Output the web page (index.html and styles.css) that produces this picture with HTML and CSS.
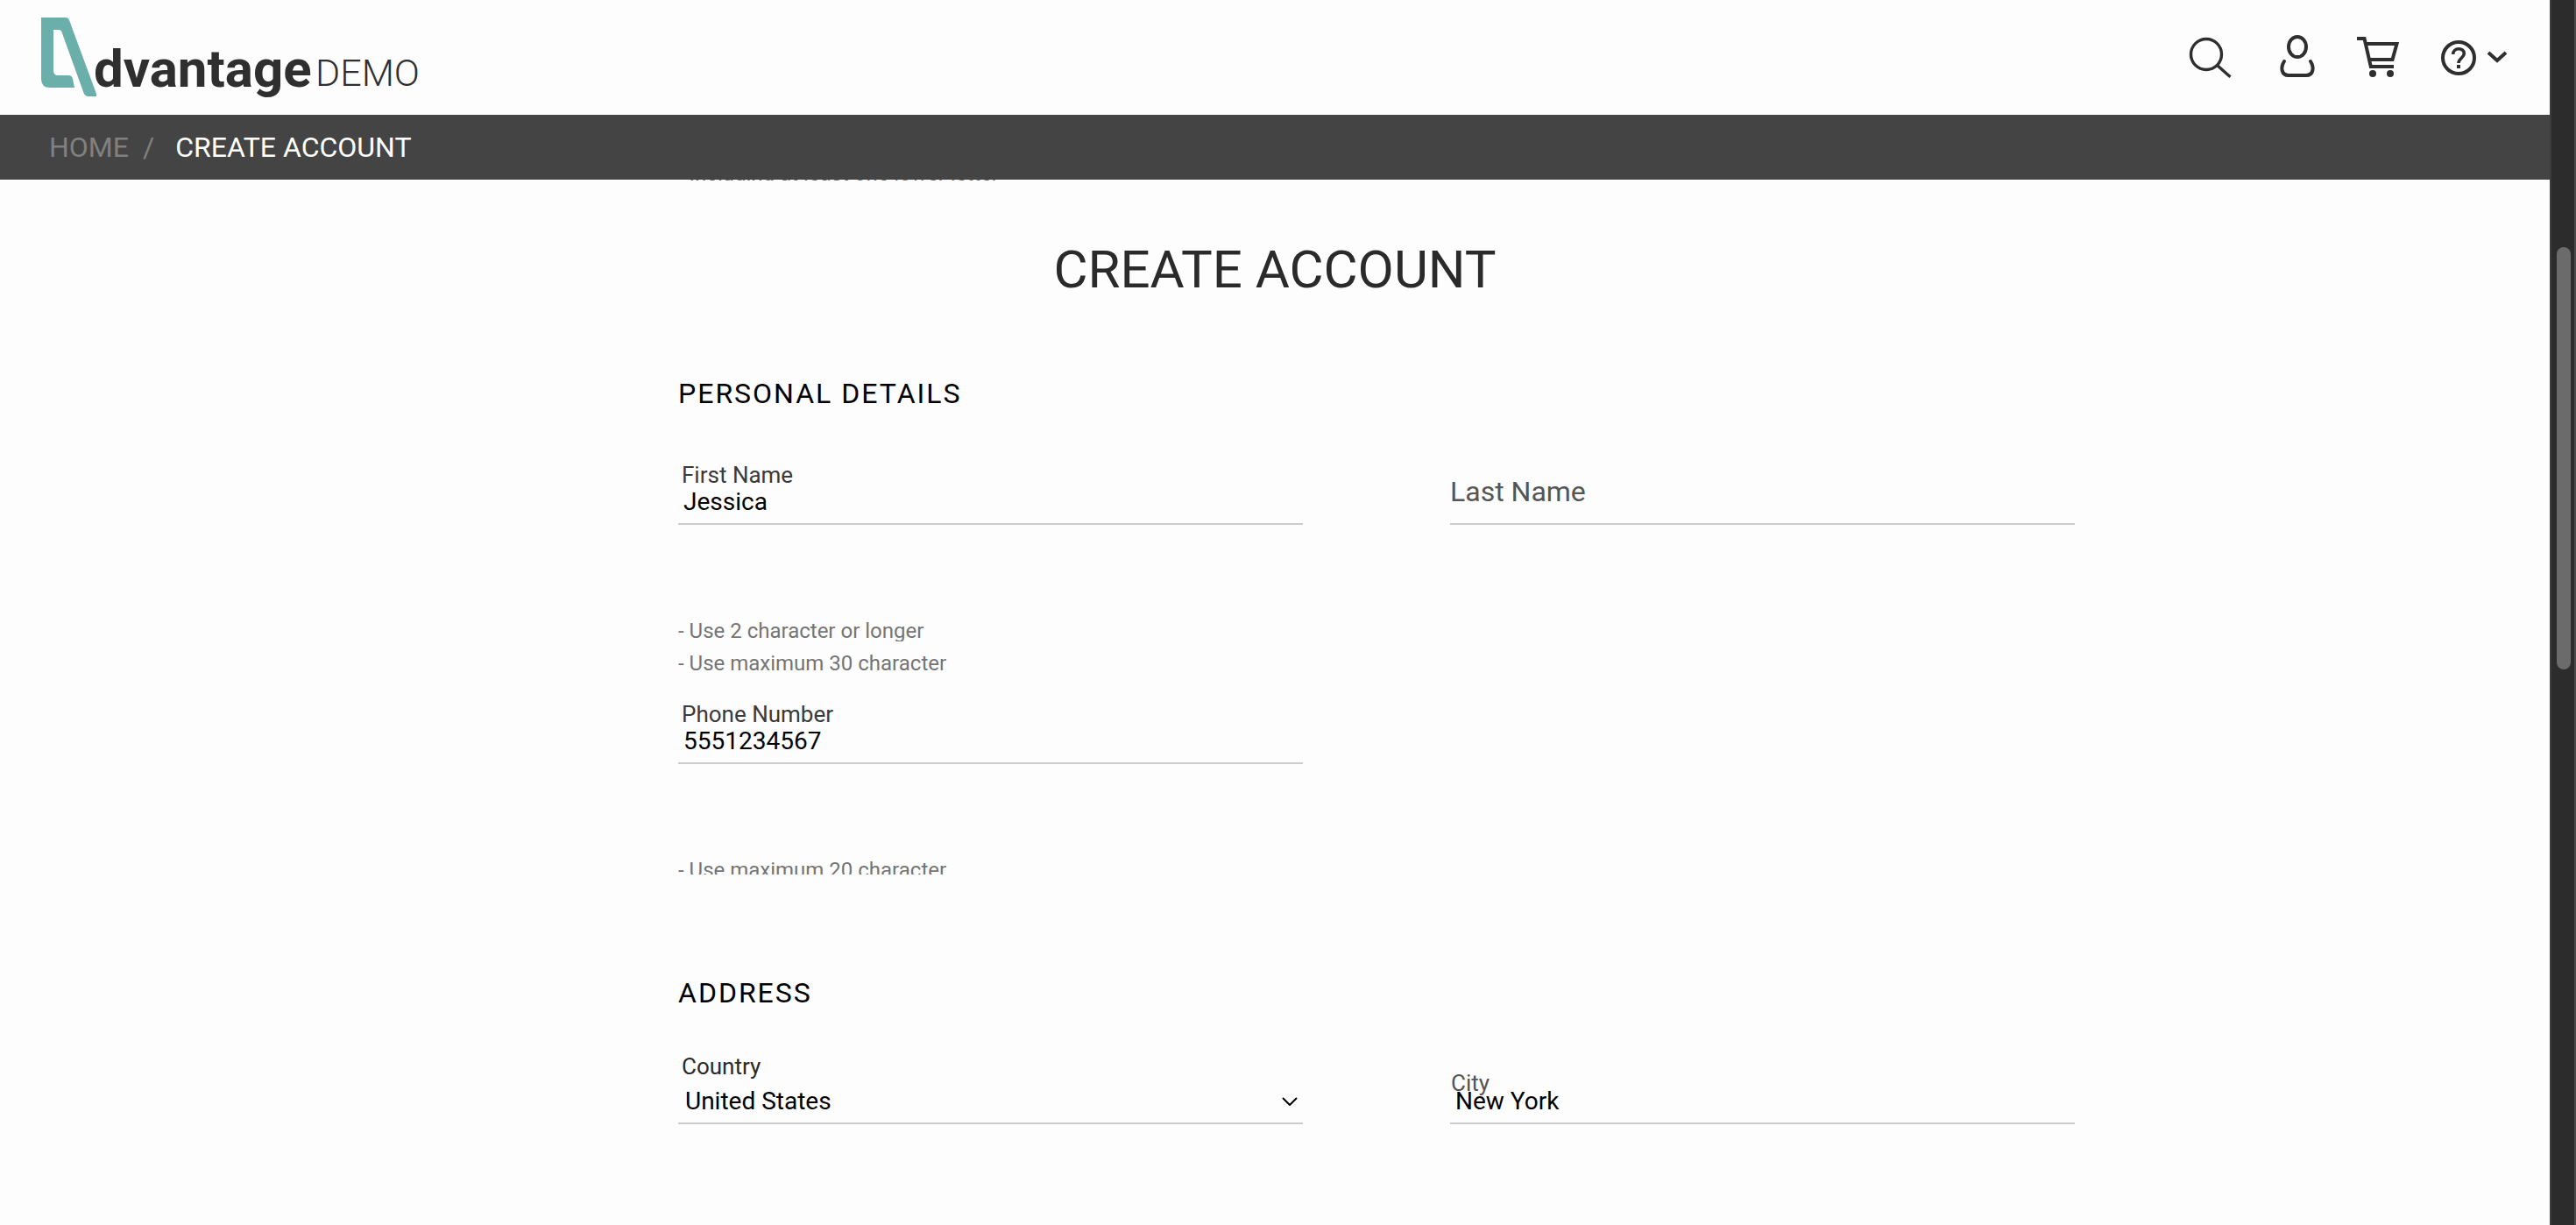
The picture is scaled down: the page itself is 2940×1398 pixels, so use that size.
FILE: index.html
```html
<!DOCTYPE html>
<html lang="en">
<head>
<meta charset="utf-8">
<title>Create account – Advantage Demo</title>
<link rel="stylesheet" href="styles.css">
</head>
<body>
<div class="page">
  <header class="header">
    <a class="logo" href="#" aria-label="Advantage Demo">
      <svg width="440" height="91" viewBox="0 0 440 91">
        <path class="logo-mark" d="M0 0H28Q31 0 32 3L63 87V90H54Q50 90 48.500 86L24 18Q23 14 20 14H14V60Q14 66 19 66H31Q35 66 36 70L38 80H10Q0 80 0 70Z"/>
        <text class="logo-name" x="60" y="79">dvantage</text>
        <text class="logo-demo" x="313" y="78">DEMO</text>
      </svg>
    </a>
    <div class="tools">
      <button class="tool tool-search" type="button" aria-label="Search">
        <svg width="48" height="51" viewBox="0 0 48 51">
          <circle cx="19" cy="22" r="17.500" stroke-width="3.400"/>
          <path d="M32 35L46.500 47.800" stroke-width="3.400"/>
        </svg>
      </button>
      <button class="tool" type="button" aria-label="User account">
        <svg width="40" height="51" viewBox="0 0 40 51">
          <ellipse cx="20" cy="13.500" rx="10" ry="11.600" stroke-width="4"/>
          <path d="M5 30C1 36 1 46 10 46H30C39 46 39 36 35 30" stroke-width="4" stroke-linecap="round"/>
        </svg>
      </button>
      <button class="tool" type="button" aria-label="Shopping cart">
        <svg width="48" height="51" viewBox="0 0 48 51">
          <path d="M0 4H8.500L15.800 36H42M10.500 10H45.500L40.500 28H14.500" stroke-width="4"/>
          <circle class="solid" cx="18" cy="44" r="4"/>
          <circle class="solid" cx="38" cy="44" r="4"/>
        </svg>
      </button>
      <button class="tool" type="button" aria-label="Help">
        <svg width="76" height="51" viewBox="0 0 76 51">
          <circle cx="20" cy="26" r="18" stroke-width="4"/>
          <path d="M13.700 22C13.700 13.700 26.300 14 26.300 21C26.300 26 20 26.500 20 32" stroke-width="3.600"/>
          <path d="M20 34V38" stroke-width="4"/>
          <path d="M54 20L64 29L74 20" stroke-width="4"/>
        </svg>
      </button>
    </div>
  </header>

  <nav class="crumbs" aria-label="Breadcrumb">
    <a class="crumb-home" href="#">HOME</a>
    <span class="crumb-sep">/</span>
    <span>CREATE ACCOUNT</span>
  </nav>

  <main>
    <div class="band">
      <p class="hint-tail">- Including at least one lower letter</p>
    </div>
    <h1 class="title">CREATE ACCOUNT</h1>

    <form class="band">
      <div class="form">
        <h2 class="heading">PERSONAL DETAILS</h2>
        <div class="fields">
          <div class="field">
            <input class="control" id="first-name" type="text" value="Jessica">
            <label class="label" for="first-name">First Name</label>
            <ul class="hints">
              <li class="hint">- Use 2 character or longer</li>
              <li class="hint">- Use maximum 30 character</li>
            </ul>
          </div>
          <div class="field">
            <input class="control" id="last-name" type="text">
            <label class="label label-resting" for="last-name">Last Name</label>
          </div>
          <div class="field">
            <input class="control" id="phone" type="tel" value="5551234567">
            <label class="label" for="phone">Phone Number</label>
            <ul class="hints hints-opening">
              <li class="hint">- Use maximum 20 character</li>
            </ul>
          </div>
        </div>

        <h2 class="heading heading-next">ADDRESS</h2>
        <div class="fields">
          <div class="field">
            <select class="control control-select" id="country">
              <option>United States</option>
            </select>
            <label class="label label-select" for="country">Country</label>
            <svg class="chevron" width="18" height="10" viewBox="0 0 18 10"><path d="M1 1L9 9L17 1"/></svg>
          </div>
          <div class="field">
            <input class="control" id="city" type="text" value="New York">
            <label class="label label-moving" for="city">City</label>
          </div>
        </div>
      </div>
    </form>
  </main>
</div>
<div class="scrollbar" aria-hidden="true"><div class="thumb"></div></div>
</body>
</html>
```
FILE: styles.css
```css
* {
  box-sizing: border-box;
}

body {
  margin: 0;
  height: 100vh;
  overflow: hidden;
  display: grid;
  grid-template-columns: 1fr 30px;
  background: #fdfdfd;
  color: #000;
  font-family: Roboto, "Liberation Sans", sans-serif;
}

.page {
  min-width: 0;
}

/* Header */
.header {
  height: 131px;
  padding: 0 48px 0 47px;
  display: flex;
  align-items: center;
  justify-content: space-between;
}

.logo svg,
.tool svg {
  display: block;
  overflow: visible;
}

.logo-mark {
  fill: #6aafaa;
}

.logo-name {
  fill: #2f2f2f;
  font-size: 60px;
  font-weight: 700;
}

.logo-demo {
  fill: #2f2f2f;
  font-size: 43px;
  font-weight: 300;
}

.tools {
  display: flex;
  gap: 48px;
}

.tool {
  padding: 0;
  border: 0;
  background: none;
  cursor: pointer;
}

.tool-search {
  margin-right: 7px;
}

.tool svg {
  fill: none;
  stroke: #2f2f2f;
}

.tool .solid {
  fill: #2f2f2f;
  stroke: none;
}

/* Breadcrumb */
.crumbs {
  height: 74px;
  padding: 0 56px;
  display: flex;
  align-items: center;
  background: #444;
  color: #fff;
  font-size: 32px;
}

.crumb-home,
.crumb-sep {
  color: #808080;
  text-decoration: none;
}

.crumb-sep {
  margin: 0 24px 0 16px;
}

/* Page content sits in the middle track */
.band {
  display: grid;
  grid-template-columns: 774fr 1594fr 542fr;
}

.band > * {
  grid-column: 2;
}

.hint-tail {
  margin: 0;
  height: 1px;
  overflow: hidden;
  display: flex;
  align-items: flex-end;
  color: #666;
  font-size: 24px;
  line-height: 16px;
}

.title {
  margin: 66px 0 85px;
  color: #2a2a2a;
  font-size: 60px;
  font-weight: 400;
  line-height: 72px;
  text-align: center;
}

.heading {
  margin: 0 0 78px;
  font-size: 32px;
  font-weight: 400;
  line-height: 40px;
  letter-spacing: 2px;
}

.heading-next {
  margin-top: 115px;
}

.fields {
  display: grid;
  grid-template-columns: 1fr 1fr;
  gap: 51px 168px;
}

.field {
  position: relative;
}

.control {
  display: block;
  width: 100%;
  height: 52px;
  padding: 0 6px;
  border: 0;
  border-bottom: 2px solid #ccc;
  border-radius: 0;
  outline: 0;
  appearance: none;
  background: none;
  color: #000;
  font-family: inherit;
  font-size: 28px;
}

.control-select {
  padding-left: 8px;
}

.label {
  position: absolute;
  left: 4px;
  top: -21px;
  color: #3a3a3a;
  font-size: 26px;
  line-height: 32px;
}

.label-resting {
  left: 0;
  top: -2px;
  color: #555;
  font-size: 32px;
}

.label-select {
  top: -30px;
  color: #2a2a2a;
}

.label-moving {
  left: 1px;
  top: -11px;
  color: #555;
}

.chevron {
  position: absolute;
  right: 6px;
  top: 21px;
  fill: none;
  stroke: #000;
  stroke-width: 2;
  pointer-events: none;
}

.hints {
  margin: 109px 0 0;
  padding: 0;
  display: grid;
  gap: 13px;
  list-style: none;
}

.hint {
  overflow: hidden;
  color: #757575;
  font-size: 24px;
  line-height: 24px;
}

.hints-opening {
  height: 17px;
  overflow: hidden;
}

/* Scrollbar */
.scrollbar {
  padding: 282px 4px 0 6px;
  border-left: 2px solid #3c3c3c;
  border-right: 2px solid #4c4c4c;
  background: #2c2c2c;
}

.thumb {
  width: 16px;
  height: 482px;
  border-radius: 8px;
  background: #6b6b6b;
}
```
